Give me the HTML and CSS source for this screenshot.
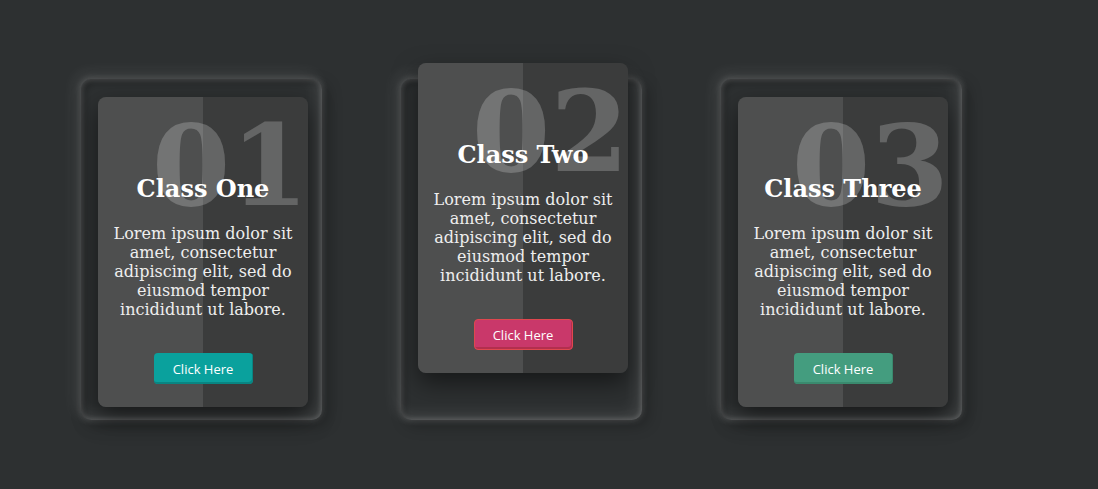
FILE: index.html
```
<!DOCTYPE html>
<html>
<head>
<meta charset="utf-8">
<link rel="stylesheet" href="styles.css">
</head>
<body>
<div class="container">
  <div class="frame">
    <div class="card">
      <span class="num">01</span>
      <h2 class="title">Class One</h2>
      <p class="text">Lorem ipsum dolor sit amet, consectetur adipiscing elit, sed do eiusmod tempor incididunt ut labore.</p>
      <a class="btn btn-teal">Click Here</a>
    </div>
  </div>
  <div class="frame">
    <div class="card card-raised">
      <span class="num">02</span>
      <h2 class="title">Class Two</h2>
      <p class="text">Lorem ipsum dolor sit amet, consectetur adipiscing elit, sed do eiusmod tempor incididunt ut labore.</p>
      <a class="btn btn-pink">Click Here</a>
    </div>
  </div>
  <div class="frame">
    <div class="card">
      <span class="num">03</span>
      <h2 class="title">Class Three</h2>
      <p class="text">Lorem ipsum dolor sit amet, consectetur adipiscing elit, sed do eiusmod tempor incididunt ut labore.</p>
      <a class="btn btn-green">Click Here</a>
    </div>
  </div>
</div>
</body>
</html>
```
FILE: styles.css
```
html, body {
  margin: 0;
  padding: 0;
  background: #2d3031;
  height: 100%;
}
body {
  font-family: "DejaVu Serif", serif;
  overflow: hidden;
}
.container {
  display: flex;
  gap: 79px;
  padding: 79px 0 0 81px;
}
.frame {
  width: 241px;
  height: 341px;
  box-sizing: border-box;
  padding: 18px 14px 13px 17px;
  border-radius: 10px;
  box-shadow: inset 5px 5px 5px rgba(0,0,0,0.2),
    inset -5px -5px 15px rgba(255,255,255,0.1),
    inset 0 0 4px 2px rgba(255,255,255,0.15),
    0 0 6px 1px rgba(255,255,255,0.14),
    5px 5px 15px rgba(0,0,0,0.3),
    -5px -5px 15px rgba(255,255,255,0.1);
  flex: none;
}
.card {
  position: relative;
  width: 210px;
  height: 310px;
  border-radius: 8px;
  background: linear-gradient(to right, #4e4f4f 0, #4e4f4f 50%, #3b3c3c 50%, #3b3c3c 100%);
  box-shadow: 0 10px 25px rgba(0,0,0,0.5);
  display: flex;
  flex-direction: column;
  align-items: center;
  padding-top: 78px;
  box-sizing: border-box;
  overflow: hidden;
}
.card-raised {
  transform: translateY(-34px);
}
.num {
  position: absolute;
  top: 12px;
  right: -1px;
  font-size: 113px;
  line-height: 1;
  font-weight: bold;
  color: rgba(255,255,255,0.21);
}
.title {
  position: relative;
  margin: 0;
  font-size: 24px;
  font-weight: bold;
  color: #ffffff;
  line-height: 28px;
}
.text {
  position: relative;
  margin: 21px 0 0;
  padding: 0 12px;
  font-size: 16px;
  line-height: 19px;
  color: #eeeeee;
  text-align: center;
}
.btn {
  position: relative;
  margin-top: 34px;
  width: 99px;
  height: 31px;
  box-sizing: border-box;
  border-radius: 4px;
  display: flex;
  align-items: center;
  justify-content: center;
  font-family: "Open Sans", sans-serif;
  font-size: 13px;
  color: #ffffff;
}
.btn-teal {
  background: #0aa19d;
  box-shadow: inset -1px -2px 0 #098582;
}
.btn-pink {
  background: #c9386a;
  border: 1px solid #e0474f;
  box-shadow: inset -1px -2px 0 #b32f4d;
}
.btn-green {
  background: #449d7f;
  box-shadow: inset -1px -2px 0 #3a8a6e;
}
```
